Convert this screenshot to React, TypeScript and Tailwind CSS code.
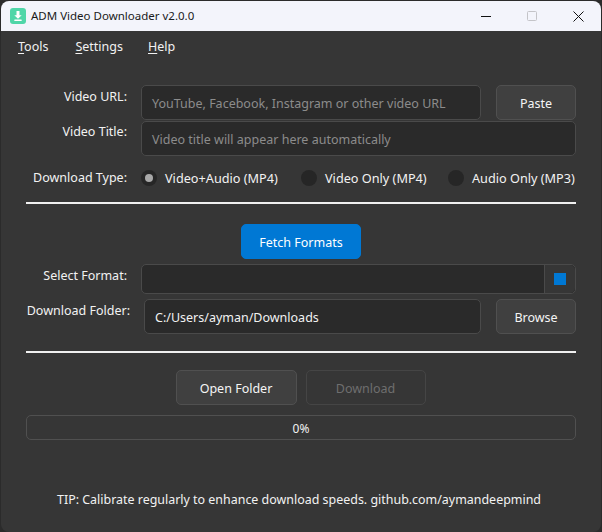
import { PropsWithChildren } from 'react';

const fieldBase = 'flex h-full items-center rounded-[5px] border border-[#4a4a4a] bg-[#2a2a2a] px-[10px] pt-[4px] text-[12.5px] whitespace-nowrap';

const Button = ({ children, className = '' }: PropsWithChildren<{ className?: string }>) => (
  <div className={`flex items-center justify-center rounded-[5px] border pt-[3px] text-[12.5px] ${className}`}>
    {children}
  </div>
);

const Label = ({ children, className = '' }: PropsWithChildren<{ className?: string }>) => (
  <div className={`shrink-0 text-right text-[12.5px] leading-[18px] whitespace-nowrap text-[#f2f2f2] ${className}`}>{children}</div>
);

const Radio = ({ label, checked = false, className = '' }: { label: string; checked?: boolean; className?: string }) => (
  <div className={`flex items-center ${className}`}>
    <span className="flex h-4 w-4 shrink-0 items-center justify-center rounded-full bg-[#262626]">
      {checked && <span className="h-2 w-2 rounded-full bg-[#a8a8a8]" />}
    </span>
    <span className="ml-[8px] pt-[2px] text-[12.7px] whitespace-nowrap text-[#f2f2f2]">{label}</span>
  </div>
);

const TitleBar = () => (
  <div className="flex h-[30px] shrink-0 items-center bg-[#f3f4fb] pl-[9px]">
    <svg width="16" height="16" viewBox="0 0 16 16">
      <rect width="16" height="16" rx="3" fill="#4fd6a8" />
      <path d="M6.5 3h3v4.2h2.2L8 10.8 4.3 7.2h2.2z" fill="#fff" />
      <rect x="4.3" y="11.6" width="7.4" height="1.4" rx=".5" fill="#fff" />
    </svg>
    <span className="ml-[5px] text-[11.5px] text-[#1a1a1a]">ADM Video Downloader v2.0.0</span>
    <div className="ml-auto flex items-center">
      <svg width="10" height="10" viewBox="0 0 10 10">
        <path d="M0 5.5h10" stroke="#111" strokeWidth="1" />
      </svg>
      <svg className="ml-[36px]" width="10" height="10" viewBox="0 0 10 10">
        <rect x=".5" y=".5" width="9" height="9" rx="1" fill="none" stroke="#c4c4c8" />
      </svg>
      <svg className="ml-[36px] mr-[17px]" width="11" height="11" viewBox="0 0 11 11">
        <path d="M.5.5l10 10M10.5.5l-10 10" stroke="#111" strokeWidth="1" />
      </svg>
    </div>
  </div>
);

const MenuBar = () => (
  <div className="flex h-[31px] shrink-0 items-center pt-[1px] pl-[17px] text-[12.5px] text-[#f2f2f2]">
    <span><span className="underline underline-offset-2">T</span>ools</span>
    <span className="ml-[27px]"><span className="underline underline-offset-2">S</span>ettings</span>
    <span className="ml-[25px]"><span className="underline underline-offset-2">H</span>elp</span>
  </div>
);

const secondary = 'border-[#505050] bg-[#404040] text-[#f5f5f5]';

export default function App() {
  return (
    <div
      className="h-[532px] w-[602px] overflow-hidden bg-[#2b2b2b] pt-px pl-px pr-px"
      style={{ fontFamily: '"Noto Sans", "Open Sans", sans-serif' }}
    >
      <div className="flex h-[531px] flex-col overflow-hidden rounded-t-[8px] rounded-b-[8px] bg-[#363636]">
        <TitleBar />
        <MenuBar />

        <div className="flex flex-col pl-[25px] pr-[25px]">
          <div className="mt-[23px] flex h-[35px]">
            <Label className="mt-[3px] w-[101px]">Video URL:</Label>
            <div className={`ml-[14px] w-[340px] text-[#8c8c8c] ${fieldBase}`}>YouTube, Facebook, Instagram or other video URL</div>
            <Button className={`ml-[15px] w-[80px] ${secondary}`}>Paste</Button>
          </div>
          <div className="mt-[1px] flex h-[35px]">
            <Label className="mt-[2px] w-[101px]">Video Title:</Label>
            <div className={`ml-[14px] w-[435px] text-[#8c8c8c] ${fieldBase}`}>Video title will appear here automatically</div>
          </div>

          <div className="mt-[13px] flex h-[18px] items-center">
            <Label className="w-[101px]">Download Type:</Label>
            <Radio checked label="Video+Audio (MP4)" className="ml-[14px] w-[160px]" />
            <Radio label="Video Only (MP4)" className="w-[147px]" />
            <Radio label="Audio Only (MP3)" />
          </div>

          <div className="mt-[15px] h-[2px] w-[550px] bg-[#f0f0f0]" />

          <Button className="mt-[20px] ml-[215px] h-[35px] w-[120px] border-[#0078d4] bg-[#0078d4] text-white">Fetch Formats</Button>

          <div className="mt-[5px] flex h-[30px]">
            <Label className="mt-[3px] w-[101px]">Select Format:</Label>
            <div className="ml-[14px] flex h-full w-[435px] rounded-[5px] border border-[#4a4a4a] bg-[#2a2a2a]">
              <div className="flex-1" />
              <div className="flex w-[31px] items-center justify-center rounded-r-[5px] border-l border-[#4a4a4a] bg-[#363636]">
                <span className="h-3 w-3 bg-[#0078d4]" />
              </div>
            </div>
          </div>

          <div className="mt-[5px] flex h-[35px]">
            <Label className="mt-[3px] w-[104px]">Download Folder:</Label>
            <div className={`ml-[14px] w-[337px] text-[#f2f2f2] ${fieldBase}`}>C:/Users/ayman/Downloads</div>
            <Button className={`ml-[15px] w-[80px] ${secondary}`}>Browse</Button>
          </div>

          <div className="mt-[17px] h-[2px] w-[550px] bg-[#f0f0f0]" />

          <div className="mt-[17px] flex h-[35px] justify-center gap-[9px] pr-[1px]">
            <Button className={`w-[121px] ${secondary}`}>Open Folder</Button>
            <Button className="w-[120px] border-[#454545] text-[#6e6e6e]">Download</Button>
          </div>

          <div className="mt-[10px] flex h-[25px] w-[550px] items-center justify-center rounded-[5px] border border-[#505050] pt-[2px] text-[12px] text-[#f2f2f2]">0%</div>

          <div className="mt-[51px] pr-[4px] text-center text-[12.45px] whitespace-nowrap text-[#f2f2f2]">TIP: Calibrate regularly to enhance download speeds. github.com/aymandeepmind</div>
        </div>
      </div>
    </div>
  );
}
